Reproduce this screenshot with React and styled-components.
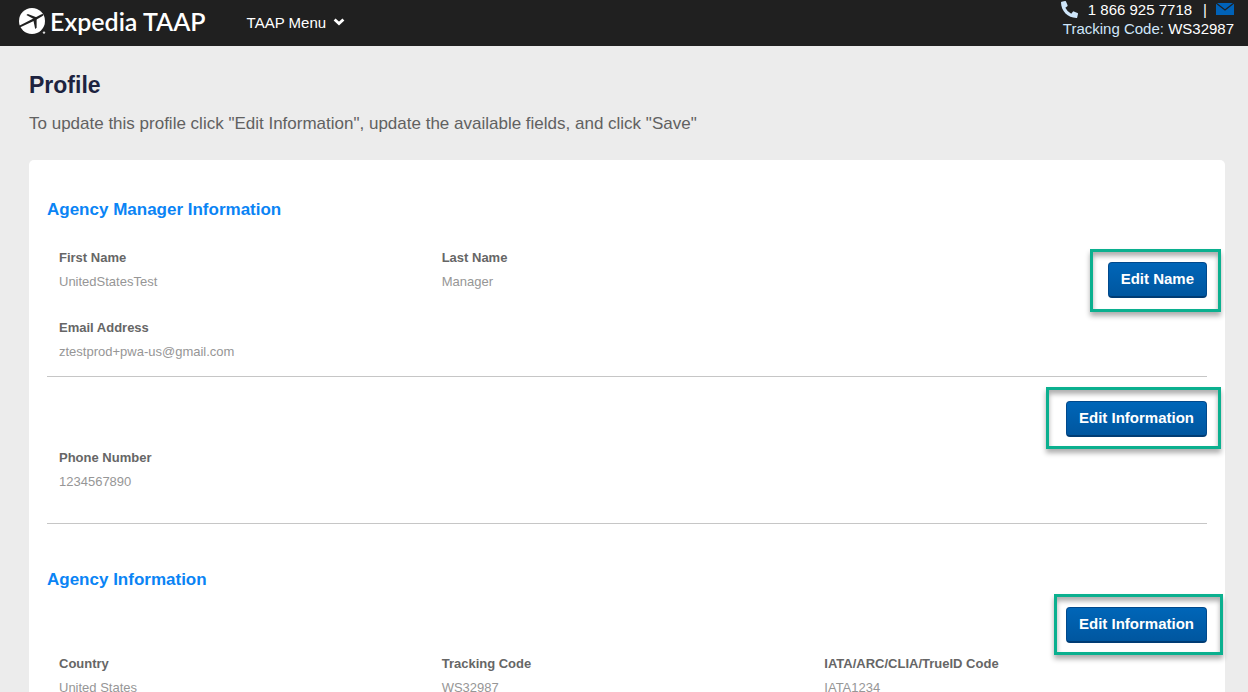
import React from 'react';
import styled, { createGlobalStyle } from 'styled-components';
import { FaPhoneAlt } from 'react-icons/fa';

const agent = {
  phone: '1 866 925 7718',
  trackingCode: 'WS32987'
};

const managerFields = [
  { label: 'First Name', value: 'UnitedStatesTest' },
  { label: 'Last Name', value: 'Manager' },
  { label: 'Email Address', value: 'ztestprod+pwa-us@gmail.com', newRow: true }
];

const contactFields = [{ label: 'Phone Number', value: '1234567890' }];

const agencyFields = [
  { label: 'Country', value: 'United States' },
  { label: 'Tracking Code', value: 'WS32987' },
  { label: 'IATA/ARC/CLIA/TrueID Code', value: 'IATA1234' }
];

function PlaneLogo() {
  return (
    <svg width="28" height="28" viewBox="0 0 28 28" aria-hidden="true">
      <circle cx="13" cy="14" r="13" fill="#fff" />
      <g fill="#202020">
        <path d="M0.2 18.8 L14.4 11.4 L22 7.4 Q24.6 6.4 24.4 8 Q24.2 8.8 22.8 9.6 L15.8 13.6 L0.8 20.4 Z" />
        <path d="M7.4 8 L8.8 7 L18 10.4 L15.6 12.6 Z" />
        <path d="M14.4 13.4 L17.6 11.8 L17.6 20.8 L16.2 22 Z" />
      </g>
      <circle cx="25" cy="25.6" r="1.2" fill="#ddd" />
    </svg>
  );
}

function ChevronIcon() {
  return (
    <svg width="12" height="8" viewBox="0 0 12 8" aria-hidden="true">
      <path d="M1.6 1.4 L6 5.6 L10.4 1.4" fill="none" stroke="#fff" strokeWidth="2.8" />
    </svg>
  );
}

function MailIcon() {
  return (
    <svg width="18" height="14" viewBox="0 0 18 14" aria-hidden="true">
      <rect width="18" height="12" fill="#0062b8" />
      <path d="M0 0 L9 7 L18 0" fill="none" stroke="#202020" strokeWidth="1.3" />
    </svg>
  );
}

function FieldList({ fields }) {
  return fields.map((field) => (
    <Field key={field.label} $newRow={field.newRow}>
      <dt>{field.label}</dt>
      <dd>{field.value}</dd>
    </Field>
  ));
}

function EditAction({ label, outline }) {
  return (
    <Action>
      <EditButton type="button">{label}</EditButton>
      <Outline $inset={outline} />
    </Action>
  );
}

function App() {
  return (
    <>
      <GlobalStyle />
      <Header>
        <Brand href="#home">
          <PlaneLogo />
          <span>Expedia TAAP</span>
        </Brand>
        <MenuButton type="button">
          TAAP Menu
          <ChevronIcon />
        </MenuButton>
        <Contact>
          <div className="line">
            <FaPhoneAlt size={17} />
            <span className="phone">{agent.phone}</span>
            <span className="pipe">|</span>
            <a href="#contact" aria-label="Email us">
              <MailIcon />
            </a>
          </div>
          <div className="line">
            <span>Tracking Code:&nbsp;<b>{agent.trackingCode}</b></span>
          </div>
        </Contact>
      </Header>

      <Main>
        <Title>Profile</Title>
        <Intro>
          To update this profile click "Edit Information", update the available fields, and click "Save"
        </Intro>

        <Card>
          <SectionTitle>Agency Manager Information</SectionTitle>
          <ManagerSection>
            <FieldGrid>
              <FieldList fields={managerFields} />
            </FieldGrid>
            <EditAction label="Edit Name" outline="-13px -14px -14px -18px" />
          </ManagerSection>

          <ContactSection>
            <ActionRow>
              <EditAction label="Edit Information" outline="-14px -14px -12px -20px" />
            </ActionRow>
            <FieldGrid>
              <FieldList fields={contactFields} />
            </FieldGrid>
          </ContactSection>

          <AgencySection>
            <SectionTitle>Agency Information</SectionTitle>
            <ActionRow>
              <EditAction label="Edit Information" outline="-13px -16px -12px -12px" />
            </ActionRow>
            <FieldGrid>
              <FieldList fields={agencyFields} />
            </FieldGrid>
          </AgencySection>
        </Card>
      </Main>
    </>
  );
}

const GlobalStyle = createGlobalStyle`
  * {
    box-sizing: border-box;
  }

  html {
    scrollbar-width: none;
  }

  body {
    margin: 0;
    background: #ececec;
    color: #616161;
    font-family: "Liberation Sans", Arial, sans-serif;
  }

  button {
    font-family: inherit;
    cursor: pointer;
  }
`;

const Header = styled.header`
  display: flex;
  align-items: flex-start;
  height: 46px;
  padding: 0 14px 0 19px;
  background: #202020;
  color: #fff;
`;

const Brand = styled.a`
  display: flex;
  align-items: center;
  gap: 3px;
  height: 42px;
  color: #fff;
  font-family: Lato, sans-serif;
  font-size: 25px;
  font-weight: 600;
  text-decoration: none;
  white-space: nowrap;
`;

const MenuButton = styled.button`
  display: flex;
  align-items: center;
  gap: 7px;
  height: 44px;
  margin-left: 41px;
  padding: 0;
  border: 0;
  background: none;
  color: #fff;
  font-size: 15px;
`;

const Contact = styled.div`
  margin-left: auto;
  font-size: 15px;
  color: #cfe6fa;

  .line {
    display: flex;
    align-items: center;
    justify-content: flex-end;
    height: 19px;
    white-space: nowrap;
  }

  .phone {
    margin-left: 10px;
    color: #fff;
  }

  .pipe {
    margin: 0 9px 0 11px;
    color: #fff;
  }

  b {
    color: #fff;
    font-weight: 400;
  }

  a {
    display: flex;
  }
`;

const Main = styled.main`
  padding: 24px 23px 0 29px;
`;

const Title = styled.h1`
  margin: 0 0 12px;
  color: #1d2340;
  font-size: 23px;
  line-height: 30px;
`;

const Intro = styled.p`
  margin: 0 0 24px;
  font-size: 17px;
  line-height: 24px;
`;

const Card = styled.section`
  padding: 37px 18px 24px;
  border-radius: 5px 5px 0 0;
  background: #fff;
`;

const SectionTitle = styled.h2`
  margin: 0;
  color: #0a84f5;
  font-size: 17px;
  line-height: 26px;
`;

const ManagerSection = styled.div`
  display: grid;
  margin-top: 23px;
  padding-bottom: 12px;
  border-bottom: 1px solid #c6c6c6;

  /* fields and button share one cell, so the columns keep the full width */
  > * {
    grid-area: 1 / 1;
  }

  > div {
    justify-self: end;
    align-self: start;
    margin-top: 16px;
  }
`;

const ContactSection = styled.div`
  padding: 24px 0 29px;
  border-bottom: 1px solid #c6c6c6;
`;

const AgencySection = styled.div`
  padding-top: 43px;

  h2 {
    margin-bottom: 14px;
  }
`;

const FieldGrid = styled.dl`
  display: grid;
  grid-template-columns: repeat(3, 1fr);
  row-gap: 22px;
  margin: 0;
  padding-left: 12px;
`;

const Field = styled.div`
  grid-column-start: ${({ $newRow }) => ($newRow ? 1 : 'auto')};
  font-size: 13px;
  line-height: 24px;

  dt {
    font-weight: 700;
    color: #666;
  }

  dd {
    margin: 0;
    color: #969696;
  }
`;

const ActionRow = styled.div`
  display: flex;
  justify-content: flex-end;
  margin-bottom: 9px;
`;

const Action = styled.div`
  position: relative;
`;

const EditButton = styled.button`
  display: block;
  height: 36px;
  padding: 0 12px 2px;
  border: 1px solid #00498c;
  border-bottom: 2px solid #003c74;
  border-radius: 4px;
  background: linear-gradient(#0066b8, #00569f);
  color: #fff;
  font-size: 15px;
  font-weight: 700;
  white-space: nowrap;
`;

const Outline = styled.span`
  position: absolute;
  inset: ${({ $inset }) => $inset};
  border: 3px solid #0bb08f;
  box-shadow: 0 4px 5px rgba(0, 0, 0, 0.32), inset 0 4px 5px rgba(0, 0, 0, 0.32);
  pointer-events: none;
`;

export default App;
